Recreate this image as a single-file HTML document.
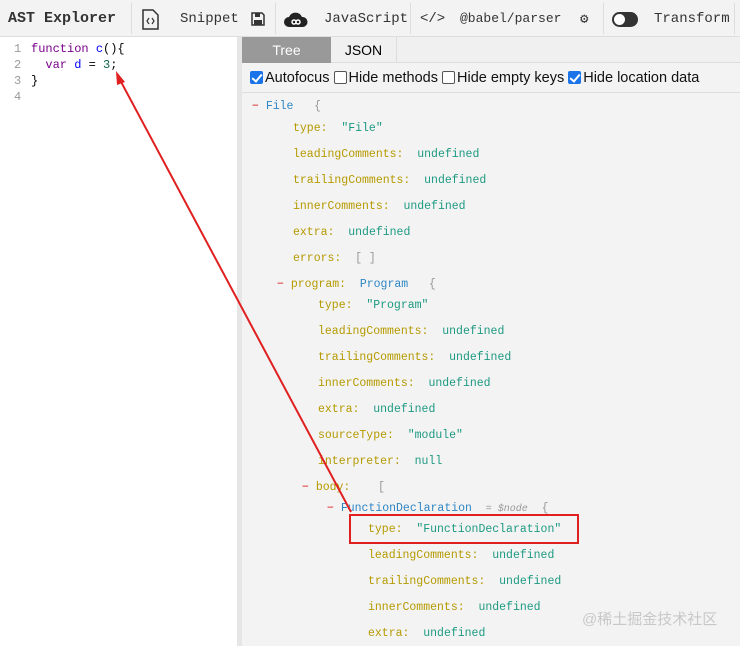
<!DOCTYPE html>
<html><head><meta charset="utf-8"><style>
*{margin:0;padding:0;box-sizing:border-box}
body{width:740px;height:646px;overflow:hidden;background:#fff;position:relative;font-family:"Liberation Sans",sans-serif}
.tb{position:absolute;left:0;top:0;width:740px;height:37px;background:#f3f3f3;border-bottom:1px solid #ddd;font-family:"Liberation Mono",monospace;font-size:14px;color:#333}
.tb span{position:absolute;top:11px;white-space:nowrap}
.sep{position:absolute;top:3px;width:1px;height:31px;background:#ddd}
.ed{position:absolute;left:0;top:37px;width:237px;height:609px;background:#fff;font-family:"Liberation Mono",monospace;font-size:12px}
.ed div{position:absolute;white-space:pre;height:16px;line-height:16px}
.div{position:absolute;left:237px;top:37px;width:5px;height:609px;background:#e6e6e6}
.rp{position:absolute;left:242px;top:37px;width:498px;height:609px;background:#f3f3f3}
.tabs{position:absolute;left:0;top:0;width:498px;height:26px;background:#f0f0f0;border-bottom:1px solid #ddd}
.t1{position:absolute;left:0;top:0;width:89px;height:26px;background:#999;color:#fff;text-align:center;line-height:26px;font-size:14px}
.t2{position:absolute;left:89px;top:0;width:66px;height:26px;border-right:1px solid #ddd;text-align:center;line-height:26px;font-size:14px;color:#000}
.opts{position:absolute;left:0;top:26px;width:498px;height:30px;border-bottom:1px solid #ddd;font-size:14.5px;white-space:nowrap;color:#111}
.cb{display:inline-block;width:13px;height:13px;border:1px solid #555;border-radius:2px;vertical-align:-2px;background:#fff;margin-right:2px}
.cb.on{background:#1a73e8;border-color:#1a73e8;position:relative}
.cb.on:after{content:"";position:absolute;left:3px;top:0px;width:4px;height:8px;border:solid #fff;border-width:0 2px 2px 0;transform:rotate(40deg)}
.tr{position:absolute;font-family:"Liberation Mono",monospace;font-size:11.5px;white-space:pre;line-height:14px}
.k{color:#b59a00}.v{color:#1d9a82}.n{color:#2f86c4}.m{color:#d11}.g{color:#999}
</style></head><body>
<div class="tb">
<span style="left:8px;top:10px;font-weight:bold;font-size:15px">AST Explorer</span>
<div class="sep" style="left:131px"></div>
<svg style="position:absolute;left:141px;top:9px" width="18" height="21"><path d="M2 1h10l5 5v14H2z" fill="none" stroke="#333" stroke-width="1.5"/><path d="M8 9l-2 3 2 3M11 9l2 3-2 3" fill="none" stroke="#333" stroke-width="1.2"/></svg>
<span style="left:180px">Snippet</span>
<svg style="position:absolute;left:251px;top:12px" width="14" height="14"><path d="M1 1h10l2 2v10H1z" fill="none" stroke="#333" stroke-width="1.5"/><rect x="4" y="1" width="5" height="4" fill="#333"/><rect x="3" y="8" width="8" height="5" fill="#333"/></svg>
<div class="sep" style="left:275px"></div>
<svg style="position:absolute;left:283px;top:10px" width="26" height="18"><path d="M6 17a5 5 0 0 1 0-10a7 7 0 0 1 13 0a5 5 0 0 1 1 10z" fill="#222"/><path d="M9 12a2 2 0 1 0 4 0a2 2 0 1 0 4 0a2 2 0 1 0-4 0a2 2 0 1 0-4 0" fill="none" stroke="#fff" stroke-width="1.5"/></svg>
<span style="left:324px">JavaScript</span>
<div class="sep" style="left:410px"></div>
<span style="left:420px">&lt;/&gt;</span>
<span style="left:460px;font-size:13px">@babel/parser</span>
<span style="left:580px">⚙</span>
<div class="sep" style="left:603px"></div>
<div style="position:absolute;left:612px;top:12px;width:26px;height:15px;border-radius:8px;background:#333"><div style="position:absolute;left:2px;top:2px;width:11px;height:11px;border-radius:50%;background:#fff"></div></div>
<span style="left:654px">Transform</span>
<div class="sep" style="left:734px"></div>
</div>
<div class="ed">
<div style="left:14px;top:4px;color:#999">1</div><div style="left:31px;top:4px"><span style="color:#708">function</span> <span style="color:#00f">c</span>(){</div>
<div style="left:14px;top:20px;color:#999">2</div><div style="left:31px;top:20px">  <span style="color:#708">var</span> <span style="color:#00f">d</span> = <span style="color:#164">3</span>;</div>
<div style="left:14px;top:36px;color:#999">3</div><div style="left:31px;top:36px">}</div>
<div style="left:14px;top:52px;color:#999">4</div>
</div>
<div class="div"></div>
<div class="rp">
<div class="tabs"><div class="t1">Tree</div><div class="t2">JSON</div></div>
<div class="opts"><div style="position:absolute;left:8px;top:7px"><span class="cb on"></span>Autofocus <span class="cb"></span>Hide methods <span class="cb"></span>Hide empty keys <span class="cb on"></span>Hide location data</div></div>
</div>
<div class="tr" style="left:252px;top:100px"><span class="m">−</span> <span class="n">File</span>   <span class="g">{</span></div>
<div class="tr" style="left:293px;top:122px"><span class="k">type:</span>  <span class="v">″File″</span></div>
<div class="tr" style="left:293px;top:148px"><span class="k">leadingComments:</span>  <span class="v">undefined</span></div>
<div class="tr" style="left:293px;top:174px"><span class="k">trailingComments:</span>  <span class="v">undefined</span></div>
<div class="tr" style="left:293px;top:200px"><span class="k">innerComments:</span>  <span class="v">undefined</span></div>
<div class="tr" style="left:293px;top:226px"><span class="k">extra:</span>  <span class="v">undefined</span></div>
<div class="tr" style="left:293px;top:252px"><span class="k">errors:</span>  <span class="g">[ ]</span></div>
<div class="tr" style="left:277px;top:278px"><span class="m">−</span> <span class="k">program:</span>  <span class="n">Program</span>   <span class="g">{</span></div>
<div class="tr" style="left:318px;top:299px"><span class="k">type:</span>  <span class="v">″Program″</span></div>
<div class="tr" style="left:318px;top:325px"><span class="k">leadingComments:</span>  <span class="v">undefined</span></div>
<div class="tr" style="left:318px;top:351px"><span class="k">trailingComments:</span>  <span class="v">undefined</span></div>
<div class="tr" style="left:318px;top:377px"><span class="k">innerComments:</span>  <span class="v">undefined</span></div>
<div class="tr" style="left:318px;top:403px"><span class="k">extra:</span>  <span class="v">undefined</span></div>
<div class="tr" style="left:318px;top:429px"><span class="k">sourceType:</span>  <span class="v">″module″</span></div>
<div class="tr" style="left:318px;top:455px"><span class="k">interpreter:</span>  <span class="v">null</span></div>
<div class="tr" style="left:302px;top:481px"><span class="m">−</span> <span class="k">body:</span>    <span class="g">[</span></div>
<div class="tr" style="left:327px;top:502px"><span class="m">−</span> <span class="n">FunctionDeclaration</span>  <span class="g" style="font-style:italic;font-size:10px">= $node</span>  <span class="g">{</span></div>
<div class="tr" style="left:368px;top:523px"><span class="k">type:</span>  <span class="v">″FunctionDeclaration″</span></div>
<div class="tr" style="left:368px;top:549px"><span class="k">leadingComments:</span>  <span class="v">undefined</span></div>
<div class="tr" style="left:368px;top:575px"><span class="k">trailingComments:</span>  <span class="v">undefined</span></div>
<div class="tr" style="left:368px;top:601px"><span class="k">innerComments:</span>  <span class="v">undefined</span></div>
<div class="tr" style="left:368px;top:627px"><span class="k">extra:</span>  <span class="v">undefined</span></div>
<div style="position:absolute;left:582px;top:608px;font-family:'Liberation Sans','Noto Sans CJK SC',sans-serif;font-size:15px;color:#c8c8c8">@稀土掘金技术社区</div>
<div style="position:absolute;left:349px;top:514px;width:230px;height:30px;border:2px solid #e02020"></div>
<svg style="position:absolute;left:0;top:0" width="740" height="646"><line x1="351" y1="512" x2="119" y2="78" stroke="#e02020" stroke-width="2"/><polygon points="116,71 125,82 117,85" fill="#e02020"/></svg>
</body></html>
